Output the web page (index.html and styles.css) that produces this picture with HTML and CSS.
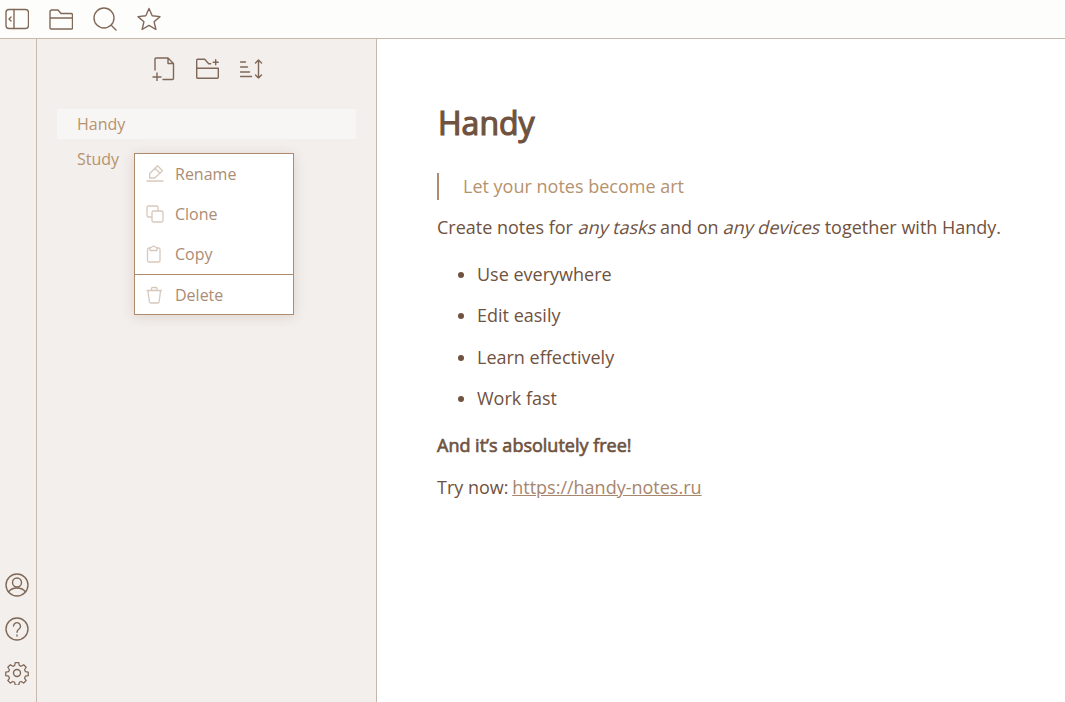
FILE: index.html
```html
<!DOCTYPE html>
<html lang="en">
<head>
<meta charset="utf-8">
<title>Handy</title>
<link rel="stylesheet" href="styles.css">
</head>
<body>
<div class="app">
  <header class="topbar">
    <svg class="ico" viewBox="0 0 24 24"><rect x="1" y="2.500" width="22.500" height="19" rx="3"/><path d="M9 2.500v19M6 10l-2 2 2 2"/></svg>
    <svg class="ico" viewBox="0 0 24 24"><path d="M1 21V5a2 2 0 0 1 2-2h6l3 3.500h10a1.500 1.500 0 0 1 1.500 1.500V21a1 1 0 0 1-1 1H2a1 1 0 0 1-1-1zM1 11h22.500"/></svg>
    <svg class="ico" viewBox="0 0 24 24"><circle cx="11" cy="11" r="10"/><path d="M18.500 18.500l4.500 4.500"/></svg>
    <svg class="ico" viewBox="0 0 24 24"><path d="M12 1.500l3.200 7.300 7.800.8-5.900 5.200 1.800 7.700L12 18.400l-6.900 4.100 1.800-7.700L1 9.600l7.800-.8z"/></svg>
  </header>
  <div class="main">
    <nav class="rail">
      <svg class="ico" viewBox="0 0 24 24"><circle cx="12" cy="12" r="11"/><circle cx="12" cy="9.500" r="4.500"/><path d="M3.500 19c2-3 5-4 8.500-4s6.500 1 8.500 4"/></svg>
      <svg class="ico" viewBox="0 0 24 24"><circle cx="12" cy="12" r="11"/><path d="M8.500 9a3.500 3.500 0 1 1 5.500 3c-1.300.9-2 1.500-2 3.200M12 18v1"/></svg>
      <svg class="ico" viewBox="0 0 24 24"><circle cx="12" cy="12" r="3.500"/><path d="M10 1.500h4l.6 3.200 2 .9 2.800-1.800 2.800 2.800-1.800 2.800.9 2 3.200.6v4l-3.200.6-.9 2 1.800 2.800-2.800 2.800-2.800-1.800-2 .9-.6 3.200h-4l-.6-3.200-2-.9-2.800 1.800-2.800-2.800 1.800-2.800-.9-2-3.200-.6v-4l3.200-.6.900-2-1.800-2.800 2.800-2.800 2.800 1.800 2-.9z" transform="translate(1.200 .3) scale(.9)"/></svg>
    </nav>
    <aside class="sidebar">
      <div class="tools">
        <svg class="ico" viewBox="0 0 24 24"><path d="M3 13V2a1 1 0 0 1 1-1H16L21.500 6.500V21.500a1 1 0 0 1-1 1H11M16 1V6.500H21.500M1 20h8M5 16v8"/></svg>
        <svg class="ico" viewBox="0 0 24 24"><path d="M.7 20.300V3.300a1 1 0 0 1 1-1h7l4 4.500h2M.7 11.300H22.300V20.300a1 1 0 0 1-1 1H1.700a1 1 0 0 1-1-1M19.700 2.800v5M17.200 5.300h5"/></svg>
        <svg class="ico" viewBox="0 0 24 24"><path d="M.5 5h5M.5 10h7M.5 15h9M.5 19.500h11M18.500 3v18M15.500 6 18.500 3l3 3M15.500 18 18.500 21l3-3"/></svg>
      </div>
      <ul class="notes">
        <li class="note active">Handy</li>
        <li class="note">Study</li>
      </ul>
      <div class="menu">
        <div class="menu-group">
          <div class="menu-item"><svg class="mico" viewBox="0 0 18 18"><path d="M3.700 13V8.500L11.500.8l5 5L8.700 13zM9 3.300l5 5M1 16h16"/></svg>Rename</div>
          <div class="menu-item"><svg class="mico" viewBox="0 0 18 18"><rect x="1" y="1" width="11" height="11" rx="1.500"/><rect class="fill" x="6" y="6" width="11" height="11" rx="1.500"/></svg>Clone</div>
          <div class="menu-item"><svg class="mico" viewBox="0 0 18 18"><path d="M4 3H3a1.500 1.500 0 0 0-1.500 1.500v11A1.500 1.500 0 0 0 3 17h9.500a1.500 1.500 0 0 0 1.500-1.500v-11A1.500 1.500 0 0 0 12.500 3H11M4 5.500V3l3.500-2L11 3v2.500z"/></svg>Copy</div>
        </div>
        <div class="menu-item last"><svg class="mico" viewBox="0 0 18 18"><path d="M1 4.500h14.500M5.500 4.500V2.500A1 1 0 0 1 6.500 1.500h3.500A1 1 0 0 1 11 2.500V4.500M2 4.500c.4 4 .8 8 1.500 11.500a1.500 1.500 0 0 0 1.500 1h6.500a1.500 1.500 0 0 0 1.500-1c.7-3.500 1.100-7.500 1.500-11.500"/></svg>Delete</div>
      </div>
    </aside>
    <main class="content">
      <h1>Handy</h1>
      <blockquote>Let your notes become art</blockquote>
      <p>Create notes for <em>any tasks</em> and on <em>any devices</em> together with Handy.</p>
      <ul class="list">
        <li>Use everywhere</li>
        <li>Edit easily</li>
        <li>Learn effectively</li>
        <li>Work fast</li>
      </ul>
      <p><strong>And it’s absolutely free!</strong></p>
      <p>Try now: <a class="link" href="#">https://handy-notes.ru</a></p>
    </main>
  </div>
</div>
</body>
</html>
```
FILE: styles.css
```css
* { box-sizing: border-box; }
html, body { margin: 0; height: 100%; overflow: hidden; }
body { font-family: "Open Sans", sans-serif; background: #fff; color: #6f5240; }
.app { display: flex; flex-direction: column; height: 702px; }
.ico { width: 24px; height: 24px; flex: none; fill: none; stroke: #806858; stroke-width: 1.4; stroke-linecap: round; stroke-linejoin: round; }
.topbar { height: 39px; flex: none; display: flex; align-items: center; gap: 20px; padding: 0 5px 1px; background: #fdfdfc; border-bottom: 1px solid #c7b8ae; }
.main { flex: 1; display: flex; min-height: 0; }
.rail { width: 37px; flex: none; display: flex; flex-direction: column; justify-content: flex-end; align-items: center; gap: 20px; padding: 0 3px 17px 0; background: #f3efec; border-right: 1px solid #c7b8ae; }
.sidebar { position: relative; width: 340px; flex: none; background: #f3efec; border-right: 1px solid #c7b8ae; padding-top: 18px; }
.tools { display: flex; justify-content: center; gap: 20px; padding-left: 3px; }
.notes { list-style: none; margin: 28px 0 0; padding: 0 20px; font-size: 16px; color: #b6926f; }
.note { height: 30px; line-height: 30px; padding-left: 20px; margin-bottom: 5px; }
.active { background: #f8f6f4; }
.menu { position: absolute; left: 97px; top: 114px; width: 160px; background: #fff; border: 1px solid #ae8a6e; box-shadow: 0 2px 12px rgba(90, 60, 40, .14); color: #ab8c76; font-size: 16px; }
.menu-group { border-bottom: 1px solid #ae8a6e; }
.menu-item { height: 40px; display: flex; align-items: center; gap: 11px; padding-left: 11px; }
.last { height: 39px; padding-top: 1px; }
.mico { width: 18px; height: 18px; flex: none; fill: none; stroke: #d8c8bc; stroke-width: 1.3; stroke-linecap: round; stroke-linejoin: round; }
.mico .fill { fill: #fff; }
.content { flex: 1; padding: 60px 60px 0; font-size: 18px; line-height: 27px; color: #6f5240; }
h1 { margin: 0 0 26px; padding-left: 1px; font-size: 32px; line-height: 48px; font-weight: 400; -webkit-text-stroke: 1.2px #6f5240; color: #6f5240; }
blockquote { margin: 0 0 14px; padding-left: 24px; height: 27px; border-left: 2px solid #ae8a6e; color: #b6926f; }
p { margin: 0 0 15px; }
em { display: inline-block; font-style: normal; transform: skewX(-14deg); transform-origin: 0 65%; }
strong { font-weight: 400; -webkit-text-stroke: .65px #6f5240; }
.list { margin: 20px 0; padding-left: 40px; }
.list li { margin-bottom: 14.400px; }
.list li:last-child { margin-bottom: 0; }
.link { color: #a6866c; text-decoration: underline; margin-left: -1px; }
```
